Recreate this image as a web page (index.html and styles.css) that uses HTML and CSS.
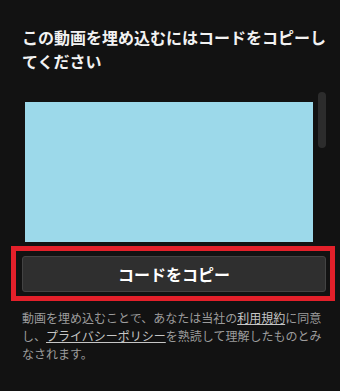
FILE: index.html
```html
<!DOCTYPE html>
<html lang="ja">
<head>
    <meta charset="UTF-8">
    <title>埋め込みコード</title>
    <link rel="stylesheet" href="styles.css">
</head>
<body>
<div class="embed">
    <h2 class="embed-title">この動画を埋め込むにはコードをコピーしてください</h2>
    <div class="preview">
        <div class="preview-frame"></div>
        <div class="scroll-thumb"></div>
    </div>
    <div class="highlight">
        <button class="copy-btn" type="button">コードをコピー</button>
    </div>
    <p class="terms">動画を埋め込むことで、あなたは当社の<a href="#">利用規約</a>に同意し、<a href="#">プライバシーポリシー</a>を熟読して理解したものとみなされます。</p>
</div>
</body>
</html>
```

FILE: styles.css
```css
* { margin: 0; padding: 0; box-sizing: border-box;}
html, body { background-color: #121212;}
body {
    font-family: "Noto Sans CJK JP", "Liberation Sans", sans-serif;
    color: #fff;
}
.embed {
    width: 340px;
    padding: 25px 6px 0 22px;
}
.embed-title {
    font-size: 16px;
    font-weight: 700;
    line-height: 24px;
    color: #f2f2f2;
}
.preview {
    position: relative;
    width: 304px;
    height: 150px;
    margin-top: 19px;
    padding: 10px 0 0 3px;
}
.preview-frame {
    width: 288px;
    height: 140px;
    background-color: #9cd9ea;
}
.scroll-thumb {
    position: absolute;
    top: 0;
    right: 0;
    width: 8px;
    height: 56px;
    border-radius: 4px;
    background-color: #2c2c2c;
}
.highlight {
    width: 324px;
    margin: 4px 0 0 -11px;
    padding: 5px 4px 0 6px;
    border: 5px solid #e3202a;
}
.copy-btn {
    display: block;
    width: 304px;
    height: 36px;
    margin-bottom: 4px;
    border: 1px solid #434343;
    border-radius: 3px;
    background-color: #2f2f2f;
    color: #fff;
    font-family: inherit;
    font-size: 16px;
    font-weight: 700;
    line-height: 34px;
    text-align: center;
}
.terms {
    width: 304px;
    margin-top: 8px;
    font-size: 12px;
    line-height: 18px;
    color: #9c9c9c;
}
.terms a {
    color: #c6c6c6;
    text-decoration: underline;
}
```
